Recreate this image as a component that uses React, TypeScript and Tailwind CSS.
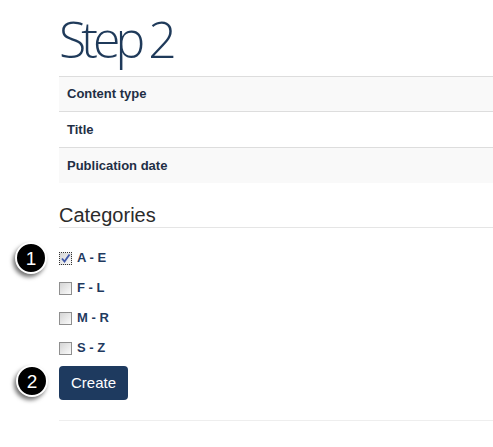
import { useState } from "react";

const rows = ["Content type", "Title", "Publication date"];
const cats = ["A - E", "F - L", "M - R", "S - Z"];

function Badge({ n, className }: { n: number; className: string }) {
  return (
    <div
      className={`absolute grid h-[32px] w-[32px] place-items-center rounded-full border-2 border-white bg-black text-[19px] leading-none text-white shadow-[-2px_3px_4px_rgba(0,0,0,0.55)] ${className}`}
    >
      {n}
    </div>
  );
}

function Box({ checked }: { checked: boolean }) {
  return (
    <span
      className={`grid h-[13px] w-[13px] shrink-0 place-items-center border bg-gradient-to-br from-[#d4d4d4] to-[#fbfbfb] ${
        checked ? "border-dotted border-[#333]" : "border-[#8f8f8f]"
      }`}
    >
      {checked && (
        <svg viewBox="0 0 11 11" className="h-[11px] w-[11px]" aria-hidden="true">
          <path d="M2 5.5 L4.5 8.5 L9.5 1.5" fill="none" stroke="#3e56a8" strokeWidth="1.8" />
        </svg>
      )}
    </span>
  );
}

export default function App() {
  const [checked, setChecked] = useState([true, false, false, false]);

  return (
    <main className="relative h-[447px] w-[493px] overflow-hidden bg-white font-['Liberation_Sans',Arial,sans-serif]">
      <div className="pl-[59px]">
        <h1 className="pb-[9px] pt-[11px] font-['Open_Sans',sans-serif] text-[50px] font-light leading-[56px] tracking-[-5px] text-[#1f3a5a]">
          Step 2
        </h1>

        <div>
          {rows.map((r, i) => (
            <div
              key={r}
              className={`flex items-center border-t border-[#dddddd] pl-2 text-[13px] font-bold text-[#1f2f45] ${
                i === 0 ? "h-[35px]" : "h-[36px]"
              } ${i % 2 === 0 ? "bg-[#f9f9f9]" : "bg-white"}`}
            >
              {r}
            </div>
          ))}
        </div>

        <h2 className="mt-[20px] border-b border-[#e5e5e5] text-[20px] leading-[24px] text-[#2b2b2b]">Categories</h2>

        <div className="mt-[15px]">
          {cats.map((c, i) => (
            <label
              key={c}
              className="flex h-[30px] cursor-pointer items-center gap-[5px] text-[13px] font-bold text-[#1f3a5f]"
              onClick={() => setChecked((s) => s.map((v, j) => (j === i ? !v : v)))}
            >
              <Box checked={checked[i]} />
              {c}
            </label>
          ))}
        </div>

        <button className="mt-[3px] h-[34px] w-[69px] rounded-[4px] bg-[#1e3a5f] text-[15px] text-white">
          Create
        </button>

        <div className="mt-[20px] border-t border-[#eeeeee]" />
      </div>

      <Badge n={1} className="left-[15px] top-[242px]" />
      <Badge n={2} className="left-[16px] top-[365px]" />
    </main>
  );
}
